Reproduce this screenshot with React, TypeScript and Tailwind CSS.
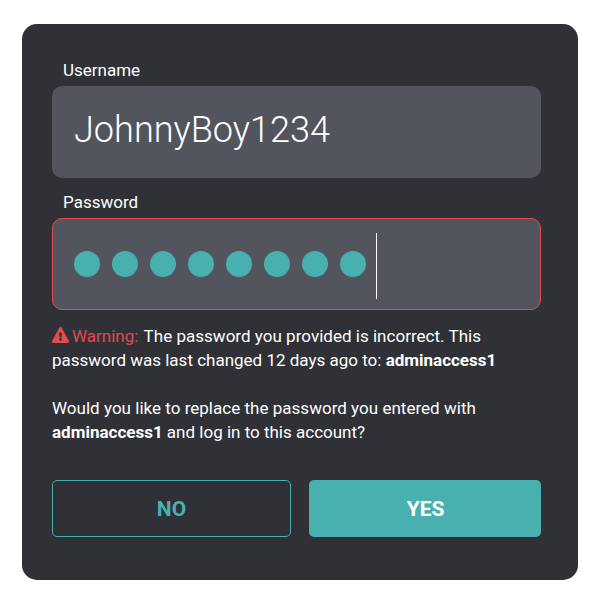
import React from "react";

const DOTS = 8;

export default function App() {
  return (
    <main className="flex h-[600px] w-[600px] items-start bg-white px-[22px] pt-6 font-['Roboto',sans-serif] text-white">
      <section className="flex h-[556px] w-[556px] flex-col rounded-[15px] bg-[#303136] pl-[30px] pr-[37px] pt-[34px]">
        <label className="ml-[11px] h-7 text-[17px] leading-6">Username</label>
        <div className="flex h-[92px] items-center rounded-[10px] bg-[#52555d] pb-1 pl-[22px] text-[36.1px] leading-[42px] font-light">
          JohnnyBoy1234
        </div>
        <label className="ml-[11px] mt-3 h-7 text-[17px] leading-6">Password</label>
        <div className="flex h-[92px] items-center rounded-[10px] border border-[#e04c4c] bg-[#52555d] pl-[21px]">
          <div className="flex gap-3">
            {Array.from({ length: DOTS }, (_, i) => (
              <span key={i} className="size-[26px] rounded-full bg-[#48b1af]" />
            ))}
          </div>
          <span className="ml-[10px] mt-1 h-[66px] w-px bg-white" />
        </div>
        <p className="mt-[14px] whitespace-nowrap text-[17px] leading-6">
          <span className="text-[#e04c4c]">
            <svg className="mr-[3px] inline-block h-4 w-[17px] align-[-1px]" viewBox="0 0 576 512" preserveAspectRatio="none" fill="currentColor">
              <path d="M569.517 440.013C587.975 472.007 564.806 512 527.94 512H48.054c-36.937 0-59.999-40.055-41.577-71.987L246.423 23.985c18.467-32.009 64.72-31.951 83.154 0l239.94 416.028zM288 354c-25.405 0-46 20.595-46 46s20.595 46 46 46 46-20.595 46-46-20.595-46-46-46zm-43.673-165.346l7.418 136c.347 6.364 5.609 11.346 11.982 11.346h48.546c6.373 0 11.635-4.982 11.982-11.346l7.418-136c.375-6.874-5.098-12.654-11.982-12.654h-63.383c-6.884 0-12.356 5.78-11.981 12.654z" />
            </svg>
            Warning:
          </span>{" "}
          <span className="ml-px tracking-[0.02px]">The password you provided is incorrect. This</span>
          <br />
          password was last changed 12 days ago to: <b className="font-bold">adminaccess1</b>
        </p>
        <p className="mt-6 whitespace-nowrap text-[17px] leading-6">
          <span className="tracking-[0.02px]">Would you like to replace the password you entered with</span>
          <br />
          <b className="font-bold">adminaccess1</b> and log in to this account?
        </p>
        <div className="mt-9 flex gap-[18px]">
          <button className="h-[57px] w-[239px] rounded-[5px] border border-[#48b1af] pt-[2px] text-[21px] font-bold text-[#48b1af]">NO</button>
          <button className="h-[57px] w-[232px] rounded-[5px] bg-[#48b1af] pl-px pt-[2px] text-[21px] font-bold">YES</button>
        </div>
      </section>
    </main>
  );
}
